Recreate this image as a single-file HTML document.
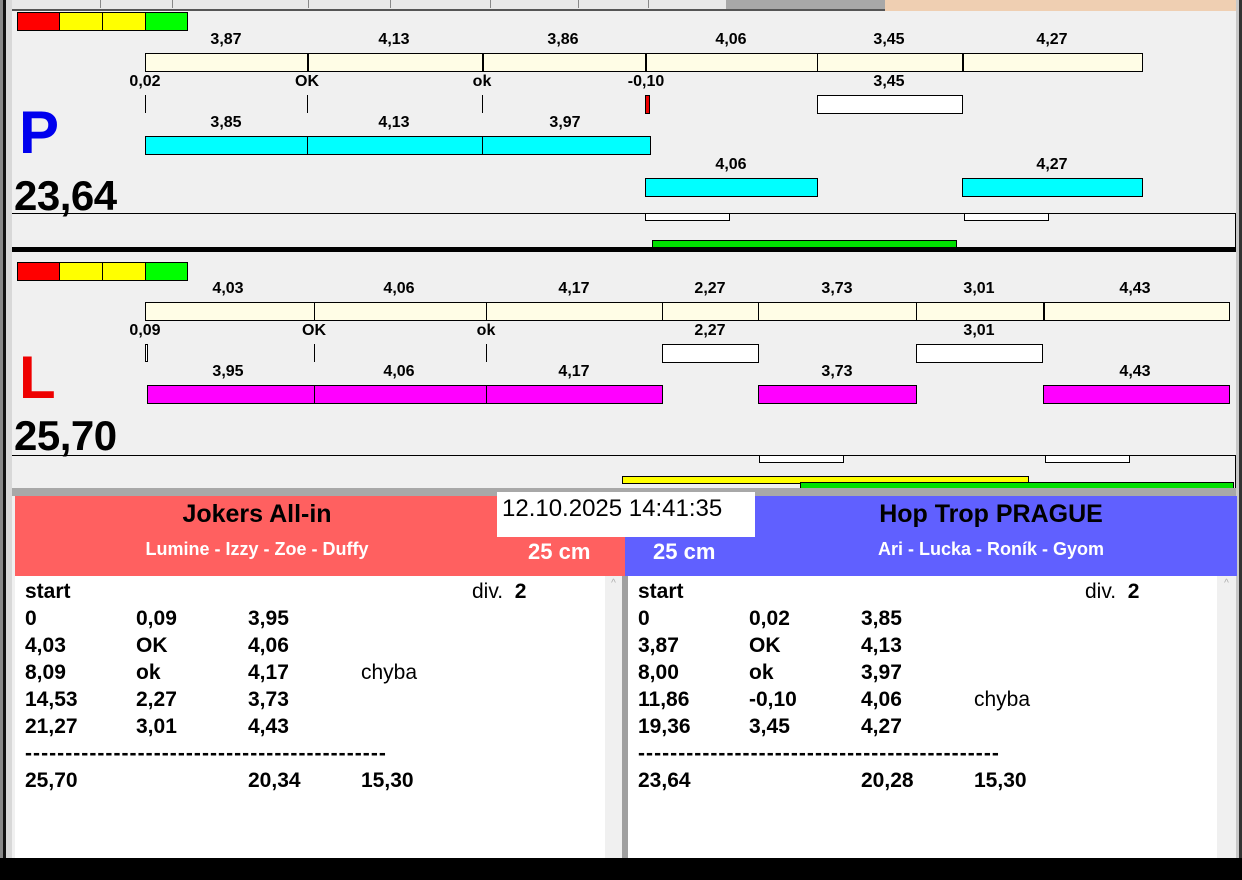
<!DOCTYPE html>
<html><head><meta charset="utf-8"><style>
*{margin:0;padding:0;box-sizing:border-box}
body{width:1242px;height:880px;position:relative;overflow:hidden;background:#f0f0f0;font-family:"Liberation Sans",Arial,sans-serif}
div{position:absolute}
.t{font-weight:bold;font-size:16px;line-height:18px;transform:translateX(-50%);white-space:nowrap;color:#000}
.b{border:1px solid #000}
.y{background:#fffde6}
.c{background:#00ffff}
.m{background:#ff00ff}
.w{background:#fff}
.v{width:1px;background:#000}
.r{font-size:21px;line-height:27px;font-weight:bold;white-space:nowrap}
.n{font-weight:normal}
.d{letter-spacing:1.05px}
</style></head><body>
<div style="left:0;top:0;width:1242px;height:11px;background:#e8e8e8"></div>
<div style="left:726px;top:0;width:160px;height:9px;background:#a8a8a8"></div>
<div style="left:885px;top:0;width:355px;height:11px;background:#efcfb2"></div>
<div style="left:100px;top:0;width:1px;height:8px;background:#888"></div>
<div style="left:172px;top:0;width:1px;height:8px;background:#888"></div>
<div style="left:308px;top:0;width:1px;height:8px;background:#888"></div>
<div style="left:390px;top:0;width:1px;height:8px;background:#888"></div>
<div style="left:490px;top:0;width:1px;height:8px;background:#888"></div>
<div style="left:578px;top:0;width:1px;height:8px;background:#888"></div>
<div style="left:648px;top:0;width:1px;height:8px;background:#888"></div>
<div style="left:12px;top:9px;width:873px;height:2px;background:#555"></div>
<div style="left:0;top:0;width:3px;height:860px;background:#888"></div>
<div style="left:3px;top:0;width:3px;height:860px;background:#111"></div>
<div style="left:6px;top:0;width:6px;height:860px;background:#d8d8d8"></div>
<div style="left:1236px;top:0;width:6px;height:860px;background:#c8c8c8"></div>
<div style="left:1239px;top:0;width:3px;height:860px;background:#333"></div>

<div class="b" style="left:17px;top:12px;width:43px;height:19px;background:#f00"></div>
<div class="b" style="left:59px;top:12px;width:44px;height:19px;background:#ff0"></div>
<div class="b" style="left:102px;top:12px;width:44px;height:19px;background:#ff0"></div>
<div class="b" style="left:145px;top:12px;width:43px;height:19px;background:#0f0"></div>

<div class="t" style="left:226px;top:31px">3,87</div>
<div class="t" style="left:394px;top:31px">4,13</div>
<div class="t" style="left:563px;top:31px">3,86</div>
<div class="t" style="left:731px;top:31px">4,06</div>
<div class="t" style="left:889px;top:31px">3,45</div>
<div class="t" style="left:1052px;top:31px">4,27</div>
<div class="b y" style="left:145px;top:53px;width:998px;height:19px"></div>
<div class="v" style="left:307px;top:53px;height:19px;width:2px"></div>
<div class="v" style="left:482px;top:53px;height:19px;width:2px"></div>
<div class="v" style="left:645px;top:53px;height:19px;width:2px"></div>
<div class="v" style="left:817px;top:53px;height:19px"></div>
<div class="v" style="left:962px;top:53px;height:19px;width:2px"></div>

<div class="t" style="left:145px;top:73px">0,02</div>
<div class="t" style="left:307px;top:73px">OK</div>
<div class="t" style="left:482px;top:73px">ok</div>
<div class="t" style="left:646px;top:73px">-0,10</div>
<div class="t" style="left:889px;top:73px">3,45</div>
<div class="v" style="left:145px;top:95px;height:18px"></div>
<div class="v" style="left:307px;top:95px;height:18px"></div>
<div class="v" style="left:482px;top:95px;height:18px"></div>
<div class="b" style="left:645px;top:95px;width:5px;height:19px;background:#e00"></div>
<div class="b w" style="left:817px;top:95px;width:146px;height:19px"></div>

<div style="left:19px;top:98px;font-size:60px;line-height:70px;font-weight:bold;color:#0000ee">P</div>

<div class="t" style="left:226px;top:114px">3,85</div>
<div class="t" style="left:394px;top:114px">4,13</div>
<div class="t" style="left:565px;top:114px">3,97</div>
<div class="b c" style="left:145px;top:136px;width:506px;height:19px"></div>
<div class="v" style="left:307px;top:136px;height:19px"></div>
<div class="v" style="left:482px;top:136px;height:19px"></div>

<div class="t" style="left:731px;top:156px">4,06</div>
<div class="t" style="left:1052px;top:156px">4,27</div>
<div class="b c" style="left:645px;top:178px;width:173px;height:19px"></div>
<div class="b c" style="left:962px;top:178px;width:181px;height:19px"></div>

<div style="left:14px;top:171px;font-size:42px;line-height:50px;font-weight:bold;letter-spacing:-0.5px">23,64</div>

<div style="left:12px;top:213px;width:1224px;height:36px;border-top:1px solid #000;border-right:1px solid #000"></div>
<div class="b w" style="left:645px;top:213px;width:85px;height:8px"></div>
<div class="b w" style="left:964px;top:213px;width:85px;height:8px"></div>
<div class="b" style="left:652px;top:240px;width:305px;height:8px;background:#00e000"></div>
<div style="left:12px;top:247px;width:1224px;height:5px;background:#000"></div>

<div class="b" style="left:17px;top:262px;width:43px;height:19px;background:#f00"></div>
<div class="b" style="left:59px;top:262px;width:44px;height:19px;background:#ff0"></div>
<div class="b" style="left:102px;top:262px;width:44px;height:19px;background:#ff0"></div>
<div class="b" style="left:145px;top:262px;width:43px;height:19px;background:#0f0"></div>

<div class="t" style="left:228px;top:280px">4,03</div>
<div class="t" style="left:399px;top:280px">4,06</div>
<div class="t" style="left:574px;top:280px">4,17</div>
<div class="t" style="left:710px;top:280px">2,27</div>
<div class="t" style="left:837px;top:280px">3,73</div>
<div class="t" style="left:979px;top:280px">3,01</div>
<div class="t" style="left:1135px;top:280px">4,43</div>
<div class="b y" style="left:145px;top:302px;width:1085px;height:19px"></div>
<div class="v" style="left:314px;top:302px;height:19px"></div>
<div class="v" style="left:486px;top:302px;height:19px"></div>
<div class="v" style="left:662px;top:302px;height:19px"></div>
<div class="v" style="left:758px;top:302px;height:19px"></div>
<div class="v" style="left:916px;top:302px;height:19px"></div>
<div class="v" style="left:1043px;top:302px;height:19px;width:2px"></div>

<div class="t" style="left:145px;top:322px">0,09</div>
<div class="t" style="left:314px;top:322px">OK</div>
<div class="t" style="left:486px;top:322px">ok</div>
<div class="t" style="left:710px;top:322px">2,27</div>
<div class="t" style="left:979px;top:322px">3,01</div>
<div class="b w" style="left:145px;top:344px;width:3px;height:18px"></div>
<div class="v" style="left:314px;top:344px;height:18px"></div>
<div class="v" style="left:486px;top:344px;height:18px"></div>
<div class="b w" style="left:662px;top:344px;width:97px;height:19px"></div>
<div class="b w" style="left:916px;top:344px;width:127px;height:19px"></div>

<div style="left:19px;top:343px;font-size:60px;line-height:70px;font-weight:bold;color:#ee0000">L</div>

<div class="t" style="left:228px;top:363px">3,95</div>
<div class="t" style="left:399px;top:363px">4,06</div>
<div class="t" style="left:574px;top:363px">4,17</div>
<div class="t" style="left:837px;top:363px">3,73</div>
<div class="t" style="left:1135px;top:363px">4,43</div>
<div class="b m" style="left:147px;top:385px;width:516px;height:19px"></div>
<div class="v" style="left:314px;top:385px;height:19px"></div>
<div class="v" style="left:486px;top:385px;height:19px"></div>
<div class="b m" style="left:758px;top:385px;width:159px;height:19px"></div>
<div class="b m" style="left:1043px;top:385px;width:187px;height:19px"></div>

<div style="left:14px;top:411px;font-size:42px;line-height:50px;font-weight:bold;letter-spacing:-0.5px">25,70</div>

<div style="left:12px;top:455px;width:1224px;height:34px;border-top:1px solid #000;border-right:1px solid #000"></div>
<div class="b w" style="left:759px;top:455px;width:85px;height:8px"></div>
<div class="b w" style="left:1045px;top:455px;width:85px;height:8px"></div>
<div class="b" style="left:622px;top:476px;width:407px;height:8px;background:#ff0"></div>
<div class="b" style="left:800px;top:482px;width:434px;height:7px;background:#00e000"></div>
<div style="left:12px;top:488px;width:1224px;height:8px;background:#a8a8a8"></div>

<div style="left:15px;top:496px;width:610px;height:80px;background:#ff6060"></div>
<div style="left:625px;top:496px;width:612px;height:80px;background:#6060ff"></div>
<div style="left:15px;top:497px;width:484px;text-align:center;font-size:25px;line-height:34px;font-weight:bold">Jokers All-in</div>
<div style="left:15px;top:538px;width:484px;text-align:center;font-size:18px;line-height:22px;font-weight:bold;color:#fff">Lumine - Izzy - Zoe - Duffy</div>
<div style="left:528px;top:538px;font-size:22px;line-height:28px;font-weight:bold;color:#fff">25 cm</div>
<div style="left:653px;top:538px;font-size:22px;line-height:28px;font-weight:bold;color:#fff">25 cm</div>
<div style="left:755px;top:497px;width:472px;text-align:center;font-size:25px;line-height:34px;font-weight:bold">Hop Trop PRAGUE</div>
<div style="left:755px;top:538px;width:472px;text-align:center;font-size:18px;line-height:22px;font-weight:bold;color:#fff">Ari - Lucka - Roník - Gyom</div>
<div style="left:497px;top:492px;width:258px;height:45px;background:#fff;font-size:24px;line-height:34px;padding-left:5px">12.10.2025 14:41:35</div>

<div style="left:15px;top:576px;width:590px;height:282px;background:#fff"></div>
<div style="left:605px;top:576px;width:17px;height:282px;background:#f0f0f0;color:#aaa;font-size:10px;text-align:center;line-height:16px">^</div>
<div style="left:622px;top:576px;width:6px;height:282px;background:#a0a0a0"></div>
<div style="left:628px;top:576px;width:589px;height:282px;background:#fff"></div>
<div style="left:1217px;top:576px;width:19px;height:282px;background:#f0f0f0;color:#aaa;font-size:10px;text-align:center;line-height:16px">^</div>

<div class="r" style="left:25px;top:578px">start<br>0<br>4,03<br>8,09<br>14,53<br>21,27<br><span class="d">---------------------------------------------</span><br>25,70</div>
<div class="r" style="left:136px;top:605px">0,09<br>OK<br>ok<br>2,27<br>3,01</div>
<div class="r" style="left:248px;top:605px">3,95<br>4,06<br>4,17<br>3,73<br>4,43<br><br>20,34</div>
<div class="r" style="left:361px;top:659px"><span class="n">chyba</span><br><br><br><br>15,30</div>
<div class="r" style="left:472px;top:578px"><span class="n">div.</span>&nbsp; 2</div>

<div class="r" style="left:638px;top:578px">start<br>0<br>3,87<br>8,00<br>11,86<br>19,36<br><span class="d">---------------------------------------------</span><br>23,64</div>
<div class="r" style="left:749px;top:605px">0,02<br>OK<br>ok<br>-0,10<br>3,45</div>
<div class="r" style="left:861px;top:605px">3,85<br>4,13<br>3,97<br>4,06<br>4,27<br><br>20,28</div>
<div class="r" style="left:974px;top:686px"><span class="n">chyba</span><br><br><br>15,30</div>
<div class="r" style="left:1085px;top:578px"><span class="n">div.</span>&nbsp; 2</div>

<div style="left:0;top:858px;width:1242px;height:22px;background:#000"></div>
</body></html>
